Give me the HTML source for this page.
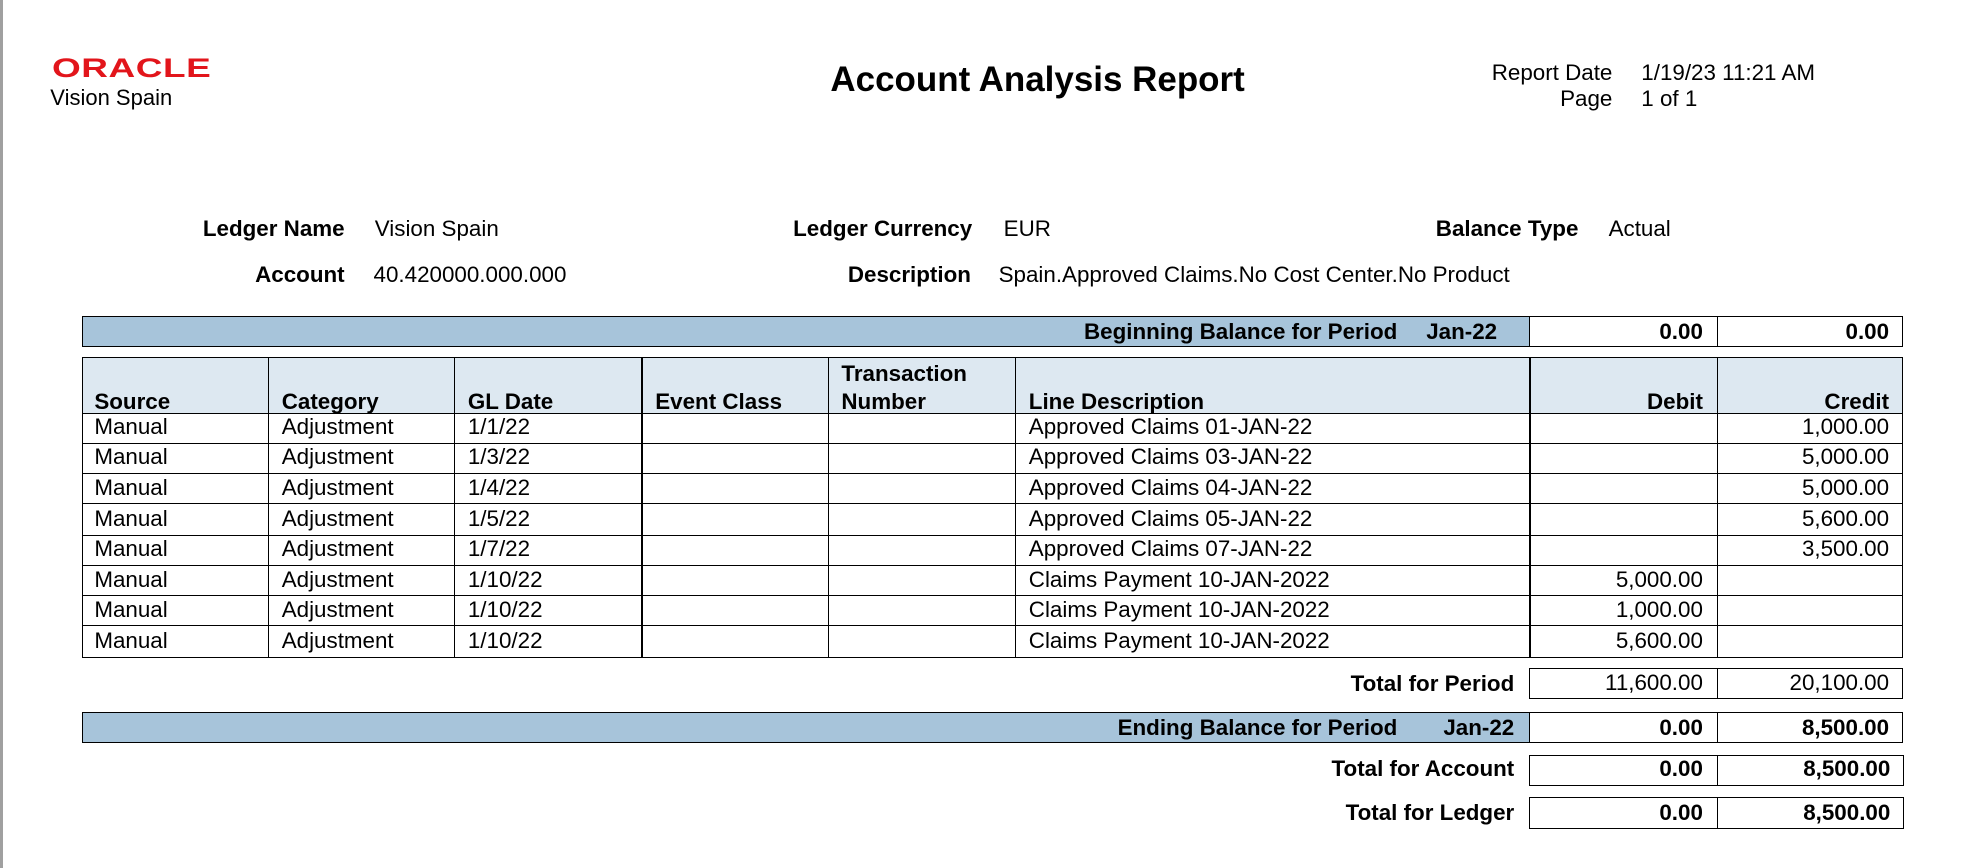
<!DOCTYPE html>
<html><head><meta charset="utf-8"><style>
html,body{margin:0;padding:0;background:#fff;width:1972px;height:868px;overflow:hidden}
#w{position:relative;width:1568px;height:690px;zoom:1.2577;font-family:"Liberation Sans",Arial,sans-serif;color:#000;font-size:17.8px}
.a{position:absolute;white-space:nowrap;line-height:1}
.r{text-align:right}
.b{font-weight:bold}
.box{position:absolute;border:1px solid #000;box-sizing:border-box}
.bar{position:absolute;background:#a7c4da;border-top:1px solid #000;border-bottom:1px solid #000;border-left:1px solid #000;box-sizing:border-box}
.hd{position:absolute;background:#dde8f1;box-sizing:border-box}
.vl{position:absolute;width:1px;background:#000}
.hl{position:absolute;height:1px;background:#000}
</style></head><body><div id="w">
<div style="position:absolute;left:0;top:0;width:2px;height:690px;background:#a0a0a0"></div>
<div class="a" style="left:41px;top:44px;color:#e2151b;font-size:21px;font-weight:bold;letter-spacing:0.3px;transform:scaleX(1.4);transform-origin:left;">ORACLE</div>
<div class="a" style="left:40px;top:69px;font-size:17.5px">Vision Spain</div>
<div class="a b" style="left:0;width:1650px;text-align:center;top:50px;font-size:27.8px">Account Analysis Report</div>
<div class="a r" style="right:286px;top:49px">Report Date</div>
<div class="a" style="left:1305px;top:49px">1/19/23 11:21 AM</div>
<div class="a r" style="right:286px;top:70px">Page</div>
<div class="a" style="left:1305px;top:70px">1 of 1</div>

<div class="a b r" style="right:1294px;top:173px">Ledger Name</div>
<div class="a" style="left:298px;top:173px">Vision Spain</div>
<div class="a b r" style="right:795px;top:173px">Ledger Currency</div>
<div class="a" style="left:798px;top:173px">EUR</div>
<div class="a b r" style="right:313px;top:173px">Balance Type</div>
<div class="a" style="left:1279px;top:173px">Actual</div>
<div class="a b r" style="right:1294px;top:210px">Account</div>
<div class="a" style="left:297px;top:210px">40.420000.000.000</div>
<div class="a b r" style="right:796px;top:210px">Description</div>
<div class="a" style="left:794px;top:210px">Spain.Approved Claims.No Cost Center.No Product</div>

<!-- beginning balance -->
<div class="bar" style="left:65px;top:251px;width:1151px;height:25px"></div>
<div class="a b r" style="right:457px;top:255px">Beginning Balance for Period</div>
<div class="a b" style="left:1134px;top:255px">Jan-22</div>
<div class="box" style="left:1216px;top:251px;width:150px;height:25px"></div>
<div class="box" style="left:1365px;top:251px;width:148px;height:25px"></div>
<div class="a b r" style="right:214px;top:255px">0.00</div>
<div class="a b r" style="right:66px;top:255px">0.00</div>

<!-- table -->
<div class="hd" style="left:65px;top:285px;width:1448px;height:43px"></div>
<div class="hl" style="left:65px;top:284px;width:1448px"></div>
<div class="hl" style="left:65px;top:328px;width:1448px"></div>
<div class="hl" style="left:65px;top:352px;width:1448px"></div>
<div class="hl" style="left:65px;top:376px;width:1448px"></div>
<div class="hl" style="left:65px;top:400px;width:1448px"></div>
<div class="hl" style="left:65px;top:425px;width:1448px"></div>
<div class="hl" style="left:65px;top:449px;width:1448px"></div>
<div class="hl" style="left:65px;top:473px;width:1448px"></div>
<div class="hl" style="left:65px;top:497px;width:1448px"></div>
<div class="hl" style="left:65px;top:522px;width:1448px"></div>
<div class="vl" style="left:65px;top:284px;height:239px"></div>
<div class="vl" style="left:213px;top:284px;height:239px"></div>
<div class="vl" style="left:361px;top:284px;height:239px"></div>
<div class="vl" style="left:510px;top:284px;height:239px"></div>
<div class="vl" style="left:658px;top:284px;height:239px"></div>
<div class="vl" style="left:807px;top:284px;height:239px"></div>
<div class="vl" style="left:1216px;top:284px;height:239px"></div>
<div class="vl" style="left:1365px;top:284px;height:239px"></div>
<div class="vl" style="left:1512px;top:284px;height:239px"></div>
<div class="a b" style="left:75px;top:311px">Source</div>
<div class="a b" style="left:224px;top:311px">Category</div>
<div class="a b" style="left:372px;top:311px">GL Date</div>
<div class="a b" style="left:521px;top:311px">Event Class</div>
<div class="a b" style="left:669px;top:289px">Transaction</div>
<div class="a b" style="left:669px;top:311px">Number</div>
<div class="a b" style="left:818px;top:311px">Line Description</div>
<div class="a b r" style="right:214px;top:311px">Debit</div>
<div class="a b r" style="right:66px;top:311px">Credit</div>

<div class="a" style="left:75px;top:327.5px;line-height:24.3px">Manual<br>Manual<br>Manual<br>Manual<br>Manual<br>Manual<br>Manual<br>Manual</div>
<div class="a" style="left:224px;top:327.5px;line-height:24.3px">Adjustment<br>Adjustment<br>Adjustment<br>Adjustment<br>Adjustment<br>Adjustment<br>Adjustment<br>Adjustment</div>
<div class="a" style="left:372px;top:327.5px;line-height:24.3px">1/1/22<br>1/3/22<br>1/4/22<br>1/5/22<br>1/7/22<br>1/10/22<br>1/10/22<br>1/10/22</div>
<div class="a" style="left:818px;top:327.5px;line-height:24.3px">Approved Claims 01-JAN-22<br>Approved Claims 03-JAN-22<br>Approved Claims 04-JAN-22<br>Approved Claims 05-JAN-22<br>Approved Claims 07-JAN-22<br>Claims Payment 10-JAN-2022<br>Claims Payment 10-JAN-2022<br>Claims Payment 10-JAN-2022</div>
<div class="a r" style="right:214px;top:449px;line-height:24.3px">5,000.00<br>1,000.00<br>5,600.00</div>
<div class="a r" style="right:66px;top:327.5px;line-height:24.3px">1,000.00<br>5,000.00<br>5,000.00<br>5,600.00<br>3,500.00</div>

<!-- totals -->
<div class="a b r" style="right:364px;top:535px">Total for Period</div>
<div class="box" style="left:1216px;top:531px;width:150px;height:25px"></div>
<div class="box" style="left:1365px;top:531px;width:148px;height:25px"></div>
<div class="a r" style="right:214px;top:534px">11,600.00</div>
<div class="a r" style="right:66px;top:534px">20,100.00</div>

<div class="bar" style="left:65px;top:566px;width:1151px;height:25px"></div>
<div class="a b r" style="right:457px;top:570px">Ending Balance for Period</div>
<div class="a b r" style="right:364px;top:570px">Jan-22</div>
<div class="box" style="left:1216px;top:566px;width:150px;height:25px"></div>
<div class="box" style="left:1365px;top:566px;width:148px;height:25px"></div>
<div class="a b r" style="right:214px;top:570px">0.00</div>
<div class="a b r" style="right:66px;top:570px">8,500.00</div>

<div class="a b r" style="right:364px;top:603px">Total for Account</div>
<div class="box" style="left:1216px;top:600px;width:150px;height:25px"></div>
<div class="box" style="left:1365px;top:600px;width:149px;height:25px"></div>
<div class="a b r" style="right:214px;top:603px">0.00</div>
<div class="a b r" style="right:65px;top:603px">8,500.00</div>

<div class="a b r" style="right:364px;top:638px">Total for Ledger</div>
<div class="box" style="left:1216px;top:634px;width:150px;height:25px"></div>
<div class="box" style="left:1365px;top:634px;width:149px;height:25px"></div>
<div class="a b r" style="right:214px;top:638px">0.00</div>
<div class="a b r" style="right:65px;top:638px">8,500.00</div>
</div></body></html>
